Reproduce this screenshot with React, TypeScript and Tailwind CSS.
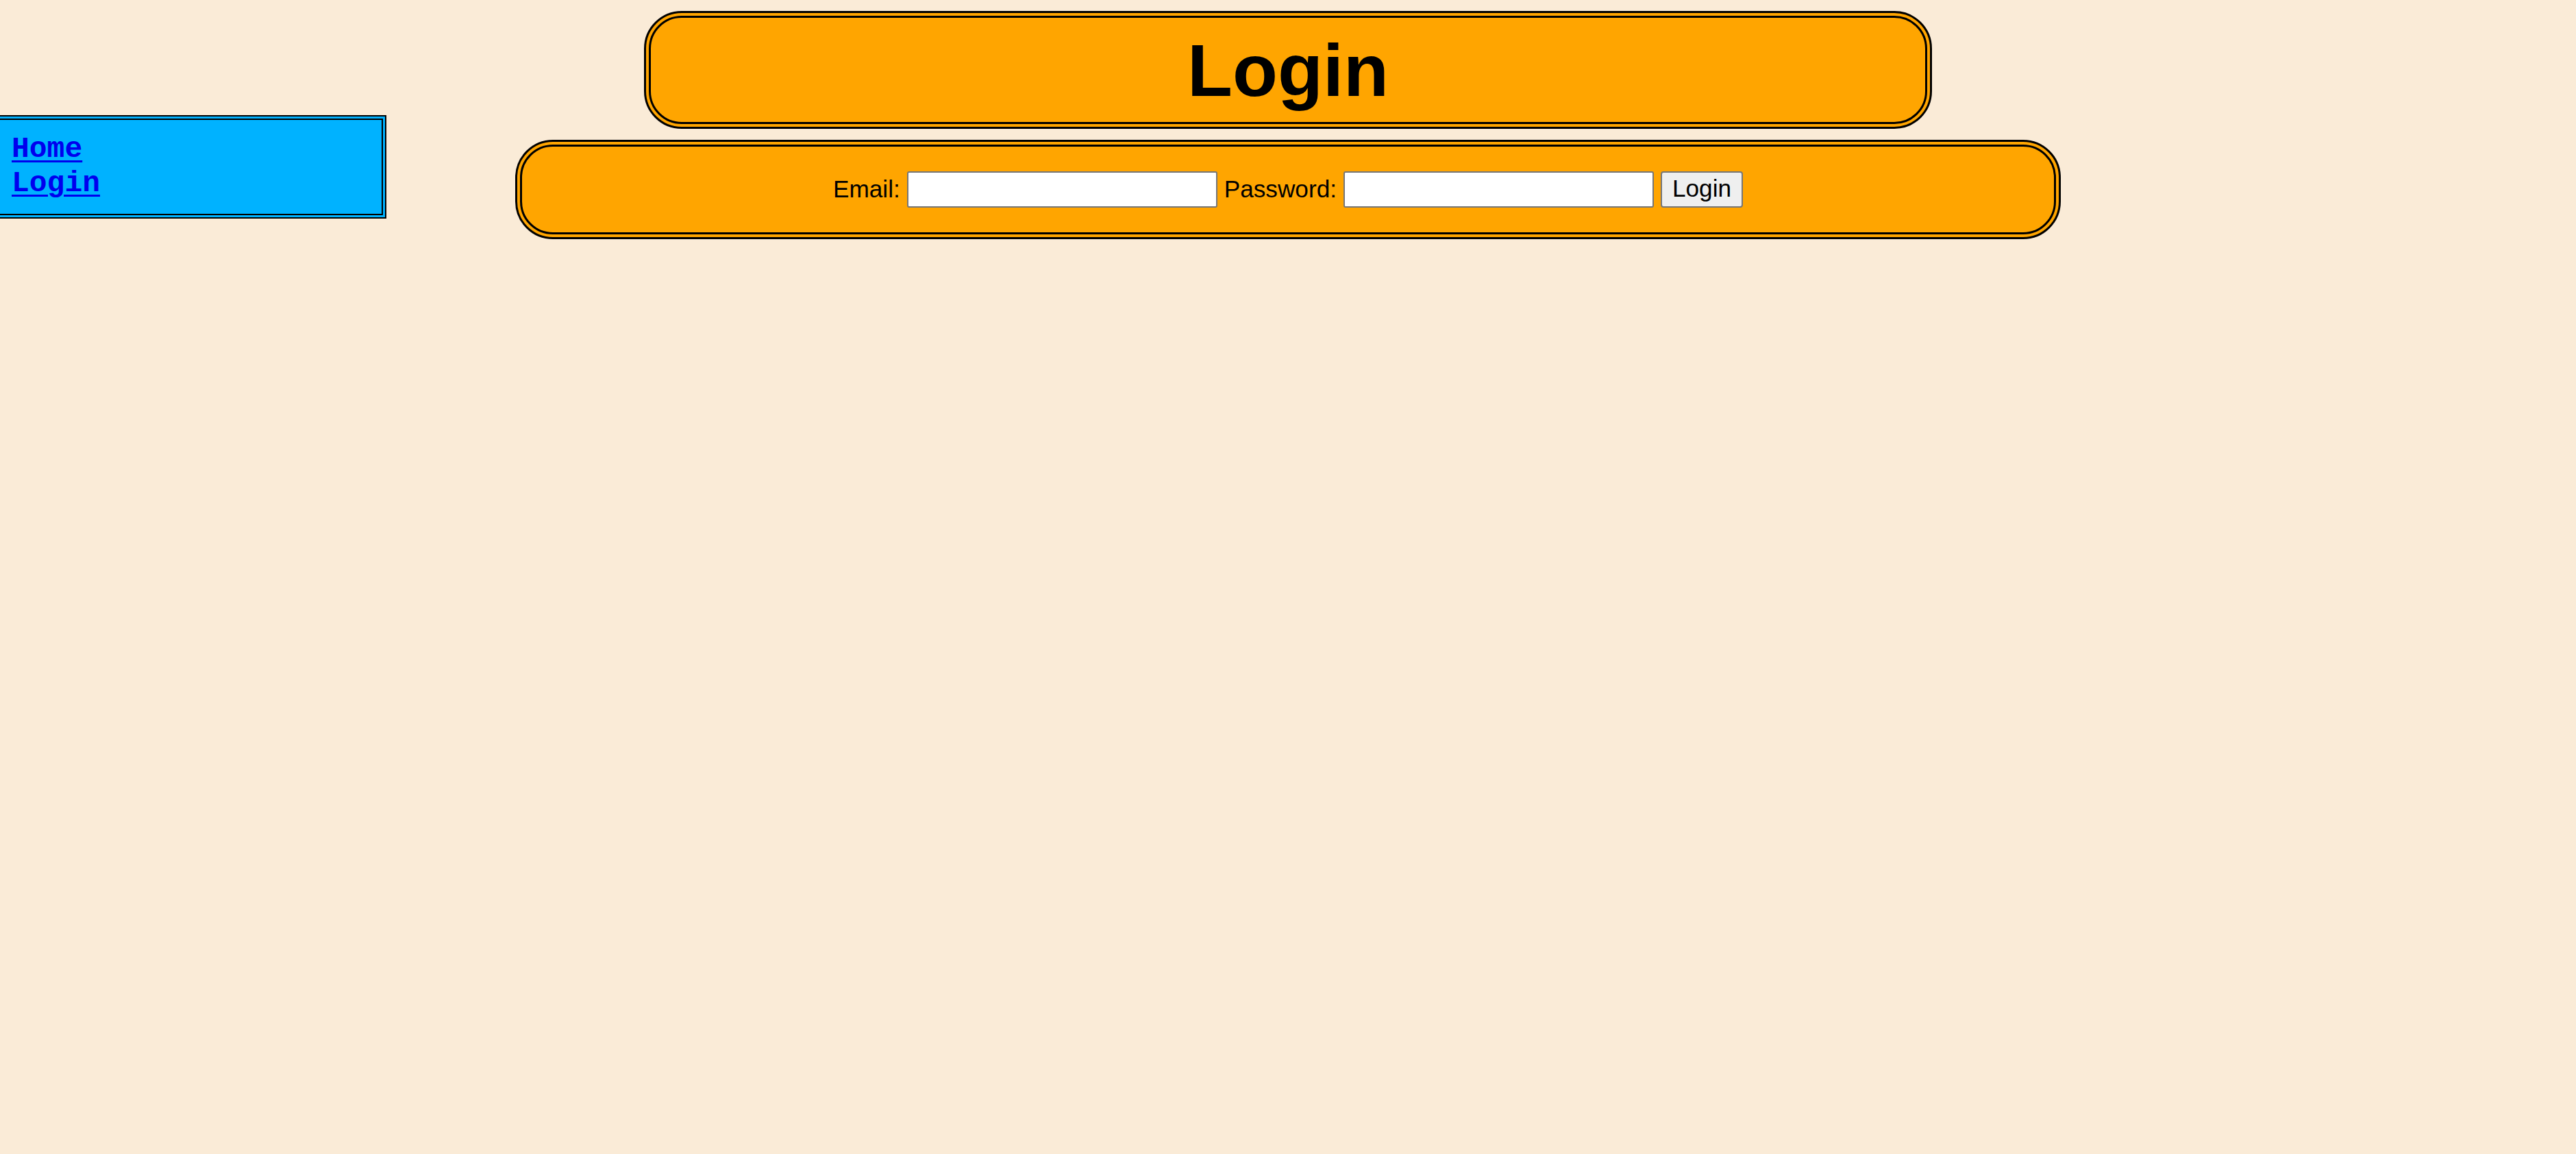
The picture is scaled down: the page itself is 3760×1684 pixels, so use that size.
import React, { useState } from "react";

// Simple login page: side nav, title banner and the inline login form
export default function App() {
    const [email, setEmail] = useState<string>("");
    const [password, setPassword] = useState<string>("");

    const handleSubmit = (e: React.FormEvent<HTMLFormElement>) => {
        e.preventDefault();
    };

    return (
        <div className="min-h-screen w-full bg-[#faebd7] font-['Liberation_Sans',Arial,sans-serif] text-black overflow-hidden">
            <div className="grid grid-cols-1 grid-rows-[auto_auto]">
                {/* Navegación lateral */}
                <nav className="col-start-1 row-start-1 row-span-2 self-start justify-self-start mt-[168px] -ml-[7px] w-[571px] bg-[#00b2ff] border-[7px] border-double border-black pl-[17px] pt-[17.5px] pb-[19.5px]">
                    <ul className="font-['Liberation_Mono','Courier_New',monospace] font-bold text-[43px] leading-[50px]">
                        <li>
                            <a href="#" className="text-[#0000ee] underline decoration-[3px] underline-offset-[5px]">Home</a>
                        </li>
                        <li>
                            <a href="#" className="text-[#0000ee] underline decoration-[3px] underline-offset-[5px]">Login</a>
                        </li>
                    </ul>
                </nav>

                <div className="col-start-1 row-start-1 justify-self-center w-1/2 mt-[16px] h-[172px] flex items-center justify-center bg-[#ffa500] border-[10px] border-double border-black rounded-[55px]">
                    <h1 className="text-[108px] leading-[125px] font-bold">Login</h1>
                </div>

                <form
                    onSubmit={handleSubmit}
                    className="col-start-1 row-start-2 justify-self-center w-[60%] mt-[16px] h-[145px] flex items-center justify-center gap-[10px] bg-[#ffa500] border-[10px] border-double border-black rounded-[55px] text-[35.2px] leading-[40px]"
                >
                    <label htmlFor="email" className="mb-[2px]">Email:</label>
                    <input
                        id="email"
                        type="email"
                        value={email}
                        onChange={(e) => setEmail(e.target.value)}
                        className="w-[453px] h-[53px] bg-white border-2 border-[#767676] rounded-[3px] px-[4px] outline-none"
                    />
                    <label htmlFor="password" className="mb-[2px]">Password:</label>
                    <input
                        id="password"
                        type="password"
                        value={password}
                        onChange={(e) => setPassword(e.target.value)}
                        className="w-[453px] h-[53px] bg-white border-2 border-[#767676] rounded-[3px] px-[4px] outline-none"
                    />
                    <button
                        type="submit"
                        className="w-[120px] h-[53px] pb-[3px] bg-[#efefef] border-2 border-[#767676] rounded-[4px] text-black"
                    >
                        Login
                    </button>
                </form>
            </div>
        </div>
    );
}
